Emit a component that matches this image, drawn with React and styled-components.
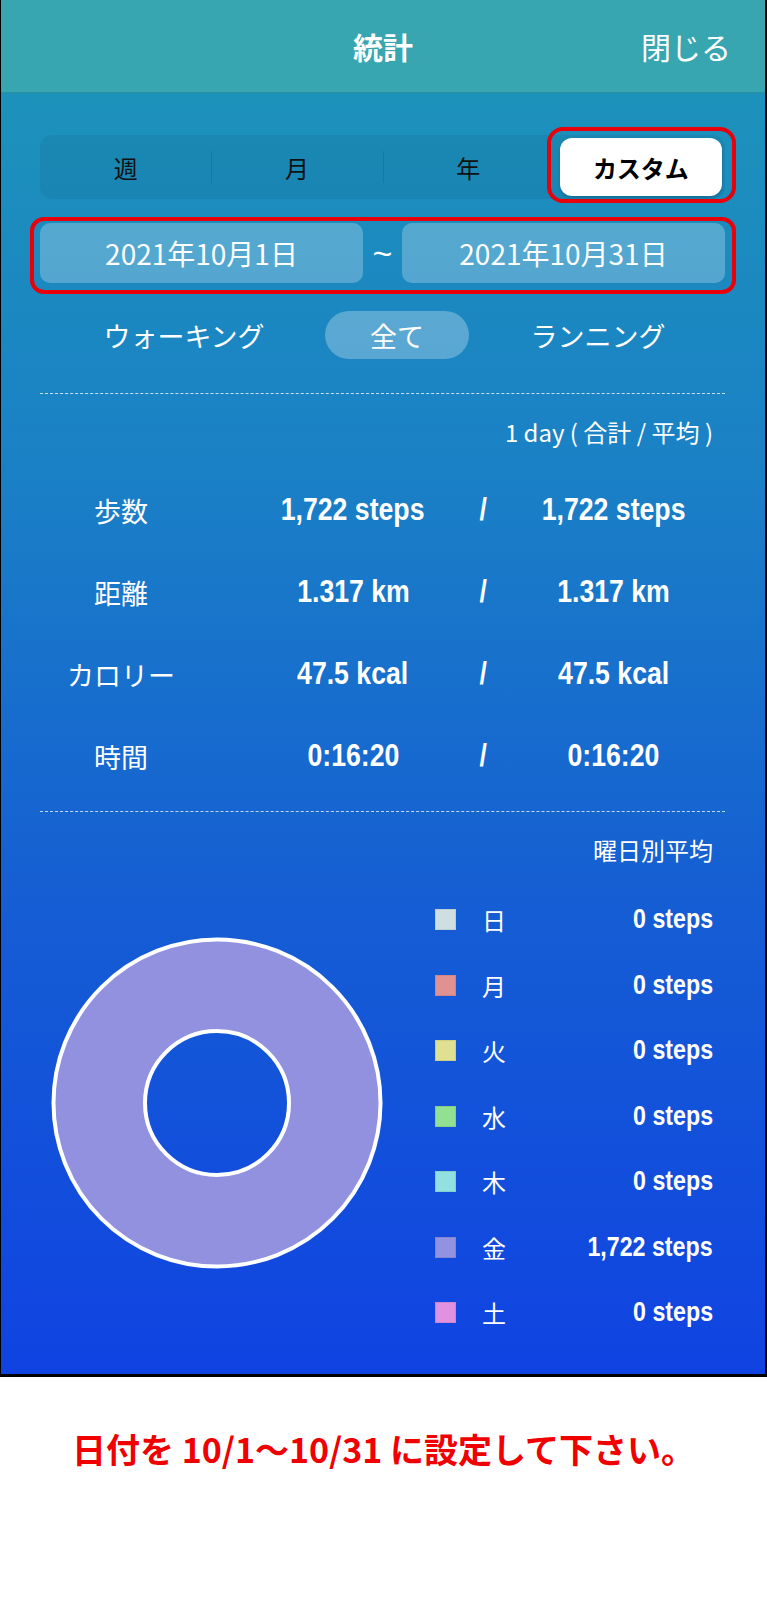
import React, { useState } from "react";
import styled, { createGlobalStyle } from "styled-components";

const JP = `"Noto Sans CJK JP", "Noto Sans", sans-serif`;
const NUM = `"Liberation Sans", Arial, sans-serif`;

const TABS = ["週", "月", "年", "カスタム"];
const FILTERS = ["ウォーキング", "全て", "ランニング"];

const STATS = [
  { label: "歩数", total: "1,722 steps", avg: "1,722 steps" },
  { label: "距離", total: "1.317 km", avg: "1.317 km" },
  { label: "カロリー", total: "47.5 kcal", avg: "47.5 kcal" },
  { label: "時間", total: "0:16:20", avg: "0:16:20" },
];

const DAYS = [
  { day: "日", color: "#cfdfe1", value: "0 steps" },
  { day: "月", color: "#e09191", value: "0 steps" },
  { day: "火", color: "#e0e092", value: "0 steps" },
  { day: "水", color: "#92e092", value: "0 steps" },
  { day: "木", color: "#92e0e0", value: "0 steps" },
  { day: "金", color: "#9292e0", value: "1,722 steps" },
  { day: "土", color: "#e092e0", value: "0 steps" },
];

const App = () => {
  const [tab, setTab] = useState("カスタム");
  const [filter, setFilter] = useState("全て");

  return (
    <>
      <GlobalStyle />
      <Phone>
        <Header>
          <Title>統計</Title>
          <CloseButton>閉じる</CloseButton>
        </Header>
        <Body>
          <Segments>
            {TABS.map((t) => (
              <Segment key={t} $active={tab === t} onClick={() => setTab(t)}>
                {tab === t ? <SegmentPill>{t}</SegmentPill> : t}
                {tab === t && <SegmentMark />}
              </Segment>
            ))}
          </Segments>

          <DateRow>
            <DateField>2021年10月1日</DateField>
            <Tilde>~</Tilde>
            <DateField>2021年10月31日</DateField>
            <DateMark />
          </DateRow>

          <FilterRow>
            {FILTERS.map((f) => (
              <FilterItem key={f} $active={filter === f} onClick={() => setFilter(f)}>
                {f}
              </FilterItem>
            ))}
          </FilterRow>

          <Dashed />
          <Caption $size={24}>1 day ( 合計 / 平均 )</Caption>

          <StatGrid>
            {STATS.map((s) => (
              <React.Fragment key={s.label}>
                <StatLabel>{s.label}</StatLabel>
                <StatValue><Num>{s.total}</Num></StatValue>
                <StatValue><Num>/</Num></StatValue>
                <StatValue><Num>{s.avg}</Num></StatValue>
              </React.Fragment>
            ))}
          </StatGrid>

          <Dashed $top={14} />
          <Caption $size={24}>曜日別平均</Caption>

          <WeekSection>
            <Donut viewBox="0 0 332 332">
              <circle cx="166" cy="166" r="118" fill="none" stroke="#9191df" strokeWidth="92" />
              <circle cx="166" cy="166" r="163.5" fill="none" stroke="#fff" strokeWidth="4" />
              <circle cx="166" cy="166" r="72" fill="none" stroke="#fff" strokeWidth="4" />
            </Donut>
            <Legend>
              {DAYS.map((d) => (
                <LegendRow key={d.day}>
                  <Swatch $color={d.color} />
                  <DayName>{d.day}</DayName>
                  <DayValue><Num $small>{d.value}</Num></DayValue>
                </LegendRow>
              ))}
            </Legend>
          </WeekSection>
        </Body>
      </Phone>
      <Notice>日付を 10/1〜10/31 に設定して下さい。</Notice>
    </>
  );
};
export default App;

const GlobalStyle = createGlobalStyle`
  html, body {
    margin: 0;
    padding: 0;
    background: #ffffff;
  }
  body {
    width: 767px;
    min-height: 1619px;
    font-family: ${JP};
  }
`;

const Phone = styled.div`
  width: 767px;
  box-sizing: border-box;
  border-left: 1px solid #000;
  border-right: 2px solid #000;
  border-bottom: 3px solid #000;
  background: linear-gradient(180deg, #1d96b8 0%, #1a80c6 35%, #155ed3 65%, #1043e2 100%);
`;

const Header = styled.header`
  height: 92px;
  display: flex;
  align-items: center;
  justify-content: center;
  position: relative;
  background: #37a6b0;
  border-bottom: 1px solid #2c8f9b;
  color: #fff;
`;

const Title = styled.h1`
  margin: 0;
  font-family: ${JP};
  font-size: 30px;
  font-weight: 700;
`;

const CloseButton = styled.span`
  position: absolute;
  right: 34px;
  top: 50%;
  transform: translateY(-50%);
  font-size: 30px;
  font-weight: 400;
`;

const Body = styled.main`
  padding: 42px 40px 28px 39px;
  display: flex;
  flex-direction: column;
`;

const Segments = styled.div`
  display: grid;
  grid-template-columns: repeat(4, 1fr);
  height: 64px;
  border-radius: 12px;
  background: rgba(0, 0, 0, 0.05);
`;

const Segment = styled.div`
  position: relative;
  display: flex;
  align-items: center;
  justify-content: center;
  font-size: 24px;
  color: #111;
  cursor: pointer;

  & + &::before {
    content: "";
    position: absolute;
    left: 0;
    top: 16px;
    bottom: 16px;
    width: 1px;
    background: ${(p) => (p.$active ? "transparent" : "rgba(0, 0, 0, 0.1)")};
  }
`;

const SegmentPill = styled.span`
  position: absolute;
  inset: 3px 3px 3px 6px;
  display: flex;
  align-items: center;
  justify-content: center;
  background: #fff;
  border-radius: 12px;
  font-weight: 700;
  color: #000;
  box-shadow: 0 2px 3px rgba(0, 0, 0, 0.18);
`;

const SegmentMark = styled.i`
  position: absolute;
  left: -7px;
  right: -11px;
  top: -8px;
  bottom: -4px;
  border: 4px solid #e8000b;
  border-radius: 16px;
  pointer-events: none;
`;

const DateRow = styled.div`
  position: relative;
  margin-top: 24px;
  display: flex;
  align-items: center;
  height: 60px;
`;

const DateField = styled.div`
  width: 323px;
  height: 60px;
  border-radius: 10px;
  background: rgba(255, 255, 255, 0.25);
  color: #fff;
  font-size: 28px;
  display: flex;
  align-items: center;
  justify-content: center;
`;

const Tilde = styled.span`
  flex: 1;
  text-align: center;
  color: #fff;
  font-family: ${NUM};
  font-size: 34px;
  font-weight: 400;
`;

const DateMark = styled.i`
  position: absolute;
  left: -10px;
  right: -11px;
  top: -6px;
  bottom: -11px;
  border: 4px solid #e8000b;
  border-radius: 14px;
  pointer-events: none;
`;

const FilterRow = styled.div`
  margin-top: 28px;
  display: grid;
  grid-template-columns: 206px 144px 1fr;
  align-items: center;
  column-gap: 38px;
  padding: 0 36px 0 41px;
`;

const FilterItem = styled.div`
  height: 48px;
  display: flex;
  align-items: center;
  justify-content: center;
  color: #fff;
  font-size: 27px;
  white-space: nowrap;
  border-radius: 24px;
  background: ${(p) => (p.$active ? "rgba(255, 255, 255, 0.28)" : "transparent")};
  cursor: pointer;
`;

const Dashed = styled.hr`
  margin: ${(p) => p.$top ?? 34}px 0 0;
  border: 0;
  border-top: 1px dashed rgba(255, 255, 255, 0.75);
  height: 0;
`;

const Caption = styled.div`
  margin-top: 23px;
  padding-right: 12px;
  text-align: right;
  color: #fff;
  font-size: ${(p) => p.$size}px;
  line-height: 30px;
`;

const StatGrid = styled.div`
  margin-top: 22px;
  display: grid;
  grid-template-columns: 202px 222px 38px 1fr;
  grid-auto-rows: 82px;
  align-items: center;
`;

const StatLabel = styled.div`
  padding-right: 40px;
  text-align: center;
  color: #fff;
  font-size: 27px;
`;

const StatValue = styled.div`
  display: flex;
  justify-content: center;
  color: #fff;
`;

const Num = styled.span`
  display: inline-block;
  font-family: ${NUM};
  font-weight: 700;
  font-size: ${(p) => (p.$small ? 27 : 31)}px;
  white-space: nowrap;
  transform: scaleX(0.86);
  transform-origin: ${(p) => (p.$small ? "right center" : "center")};
`;

const WeekSection = styled.div`
  margin-top: 22px;
  display: flex;
  align-items: flex-start;
`;

const Donut = styled.svg`
  width: 332px;
  height: 332px;
  margin: 50px 0 0 11px;
  flex-shrink: 0;
`;

const Legend = styled.ul`
  list-style: none;
  margin: 0 12px 0 auto;
  padding: 0;
  width: 278px;
`;

const LegendRow = styled.li`
  height: 65.5px;
  display: flex;
  align-items: center;
`;

const Swatch = styled.span`
  width: 19px;
  height: 19px;
  background: ${(p) => p.$color};
  border: 1px solid rgba(0, 0, 0, 0.08);
`;

const DayName = styled.span`
  margin-left: 26px;
  color: #fff;
  font-size: 24px;
`;

const DayValue = styled.span`
  margin-left: auto;
  color: #fff;
`;

const Notice = styled.p`
  margin: 50px 0 0;
  text-align: center;
  color: #f00000;
  font-family: ${JP};
  font-weight: 700;
  font-size: 34px;
  line-height: 44px;
`;
